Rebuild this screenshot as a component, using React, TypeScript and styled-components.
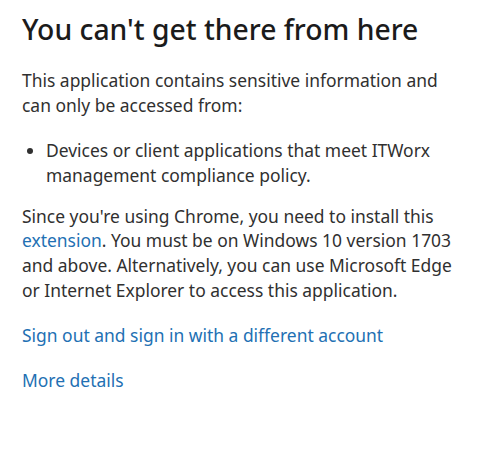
import * as React from "react";
import styled, { createGlobalStyle } from "styled-components";

const Global = createGlobalStyle`
  html, body {
    margin: 0;
    padding: 0;
    background: #ffffff;
  }
  body {
    font-family: "Noto Sans", "Open Sans", sans-serif;
  }
`;

const Page = styled.div`
  width: 501px;
  height: 455px;
  box-sizing: border-box;
  padding: 11px 0 0 22px;
  display: flex;
  flex-direction: column;
  background: #fff;
`;

const Title = styled.h1`
  margin: 0 0 21px 0;
  font-size: 28.3px;
  font-weight: 500;
  line-height: 36px;
  color: #1b1b1b;
`;

const Text = styled.p<{ $gap?: number }>`
  width: 440px;
  margin: 0 0 ${(p) => p.$gap ?? 20}px 0;
  font-size: 17.45px;
  line-height: 24.6px;
  color: #303030;
`;

const List = styled.ul`
  width: 440px;
  box-sizing: border-box;
  margin: 0 0 16.5px 0;
  padding-left: 24px;
  font-size: 17.45px;
  line-height: 24.6px;
  color: #303030;
`;

const Link = styled.a<{ $block?: boolean }>`
  color: #2270b3;
  text-decoration: none;
  font-size: 17.45px;
  line-height: 24.6px;
  display: ${(p) => (p.$block ? "block" : "inline")};
  margin-bottom: ${(p) => (p.$block ? "20.5px" : "0")};
`;

const App = () => {
  return (
    <>
      <Global />
      <Page>
        <Title>You can't get there from here</Title>
        <Text $gap={21}>
          This application contains sensitive information and can only be accessed from:
        </Text>
        <List>
          <li>Devices or client applications that meet ITWorx management compliance policy.</li>
        </List>
        <Text $gap={20.5}>
          Since you're using Chrome, you need to install this <Link href="#">extension</Link>. You
          must be on Windows 10 version 1703 and above. Alternatively, you can use Microsoft Edge
          or Internet Explorer to access this application.
        </Text>
        <Link $block href="#">Sign out and sign in with a different account</Link>
        <Link $block href="#">More details</Link>
      </Page>
    </>
  );
};

export default App;
